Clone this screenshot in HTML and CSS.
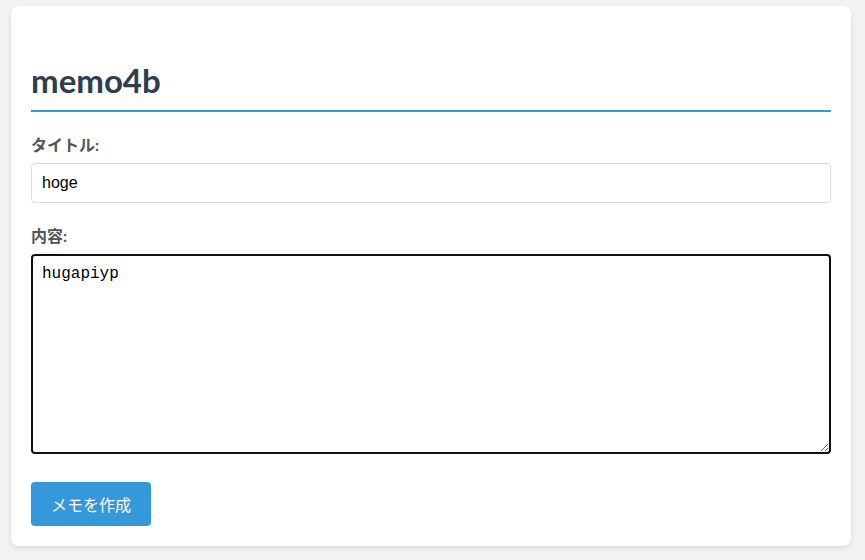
FILE: index.html
```html
<!DOCTYPE html>
<html lang="ja">
<head>
    <meta charset="UTF-8">
    <meta name="viewport" content="width=device-width, initial-scale=1.0">
    <title>memo4b</title>
    <link rel="stylesheet" href="styles.css">
</head>
<body>

    <div class="container">
        <h1>memo4b</h1>

        <form class="memo-form">
            <div class="form-group">
                <label for="title">タイトル:</label>
                <input type="text" id="title" name="title" value="hoge">
            </div>
            <div class="form-group">
                <label for="content">内容:</label>
                <textarea id="content" name="content" class="focused">hugapiyp</textarea>
            </div>
            <button type="submit">メモを作成</button>
        </form>
    </div>

</body>
</html>
```

FILE: styles.css
```css
body {
    background-color: #f2f2f2; /* Gris claro */
    color: #333;
    font-family: Lato, 'Noto Sans CJK JP', sans-serif;
    margin: 0;
    padding: 6px 14px 14px 11px;
}
.container {
    width: 800px;
    background-color: #ffffff;
    padding: 20px;
    border-radius: 8px;
    box-shadow: 0 2px 5px rgba(0, 0, 0, 0.1);
}
h1 {
    color: #2c3e50; /* Azul oscuro */
    font-size: 33px;
    margin: 34px 0 20px;
    padding-bottom: 10px;
    border-bottom: 2px solid #3498db;
}
.form-group {
    margin-bottom: 20px;
}
label {
    display: block;
    font-weight: bold;
    color: #555;
    font-size: 16px;
    margin-bottom: 7px;
}
input[type="text"],
textarea {
    display: block;
    width: 100%;
    box-sizing: border-box;
    padding: 10px;
    border: 1px solid #ddd;
    border-radius: 4px;
}
input[type="text"] {
    font-family: 'Liberation Sans', Arial, sans-serif;
    font-size: 16px;
    color: #000;
}
textarea {
    height: 200px;
    font-family: 'Liberation Mono', monospace;
    font-size: 16px;
    color: #000;
}
textarea.focused {
    border: 2px solid #101010; /* anillo de foco */
    padding: 9px;
}
button {
    margin-top: 8px;
    padding: 10px 20px;
    font-family: 'Noto Sans CJK JP', sans-serif;
    font-size: 16px;
    background-color: #3498db; /* Azul */
    color: white;
    border: none;
    border-radius: 4px;
    cursor: pointer;
}
```
